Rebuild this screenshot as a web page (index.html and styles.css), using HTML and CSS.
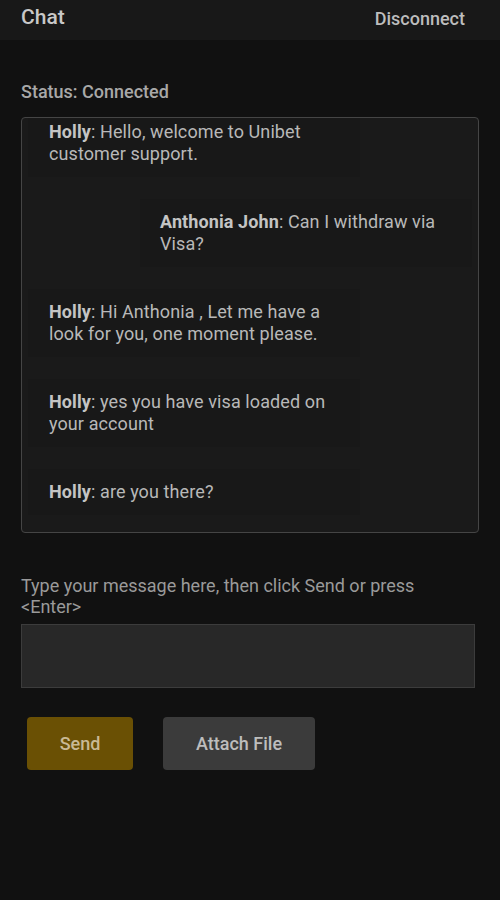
FILE: index.html
```html
<!DOCTYPE html>
<html lang="en">
<head>
<meta charset="utf-8">
<title>Chat</title>
<link rel="stylesheet" href="styles.css">
</head>
<body>
<header class="topbar">
  <span class="title">Chat</span>
  <span class="disconnect">Disconnect</span>
</header>
<main class="content">
  <div class="status">Status: Connected</div>
  <div class="chatbox">
    <div class="messages">
      <div class="bubble agent"><b>Holly</b>: Hello, welcome to Unibet customer support.</div>
      <div class="bubble user"><b>Anthonia John</b>: Can I withdraw via Visa?</div>
      <div class="bubble agent"><b>Holly</b>: Hi Anthonia , Let me have a look for you, one moment please.</div>
      <div class="bubble agent"><b>Holly</b>: yes you have visa loaded on your account</div>
      <div class="bubble agent"><b>Holly</b>: are you there?</div>
    </div>
  </div>
  <label class="prompt">Type your message here, then click Send or press &lt;Enter&gt;</label>
  <div class="input"></div>
  <div class="actions">
    <button class="btn send">Send</button>
    <button class="btn attach">Attach File</button>
  </div>
</main>
</body>
</html>
```
FILE: styles.css
```css
html, body {
  margin: 0;
  padding: 0;
  background: #111111;
  font-family: Roboto, "Liberation Sans", sans-serif;
  height: 100%;
}
.topbar {
  height: 40px;
  background: #181818;
  display: flex;
  align-items: center;
  justify-content: space-between;
  padding: 0 35px 0 21px;
  box-sizing: border-box;
}
.title {
  font-size: 21px;
  font-weight: 500;
  color: #c8c8c8;
  margin-top: -6px;
}
.disconnect {
  font-size: 18px;
  font-weight: 500;
  color: #bdbdbd;
  margin-top: -4px;
}
.content {
  padding: 0 21px;
}
.status {
  margin-top: 41px;
  font-size: 18px;
  line-height: 22px;
  font-weight: 500;
  color: #a8a8a8;
}
.chatbox {
  margin-top: 14px;
  height: 416px;
  box-sizing: border-box;
  border: 1px solid #454545;
  border-radius: 4px;
  background: #1a1a1a;
  overflow: hidden;
}
.messages {
  display: flex;
  flex-direction: column;
  gap: 22px;
  margin-top: -9px;
  padding: 0 6px;
}
.bubble {
  width: 332px;
  box-sizing: border-box;
  padding: 12px 21px;
  background: #181818;
  font-size: 18px;
  line-height: 22px;
  letter-spacing: 0.1px;
  color: #b8b8b8;
}
.bubble b {
  font-weight: 700;
  color: #c4c4c4;
}
.bubble.user {
  align-self: flex-end;
  padding-left: 20px;
}
.prompt {
  display: block;
  margin-top: 42px;
  font-size: 18px;
  line-height: 21px;
  color: #9a9a9a;
}
.input {
  margin-top: 7px;
  width: 454px;
  height: 64px;
  box-sizing: border-box;
  background: #282828;
  border: 1px solid #3c3c3c;
}
.actions {
  display: flex;
  gap: 30px;
  margin-top: 29px;
  padding-left: 6px;
}
.btn {
  height: 53px;
  border: none;
  border-radius: 4px;
  font-family: Roboto, "Liberation Sans", sans-serif;
  font-size: 18px;
  font-weight: 500;
  padding: 0;
}
.send {
  width: 106px;
  background: #6a5004;
  color: #c9b994;
}
.attach {
  width: 152px;
  background: #3b3b3b;
  color: #bdbdbd;
}
```
